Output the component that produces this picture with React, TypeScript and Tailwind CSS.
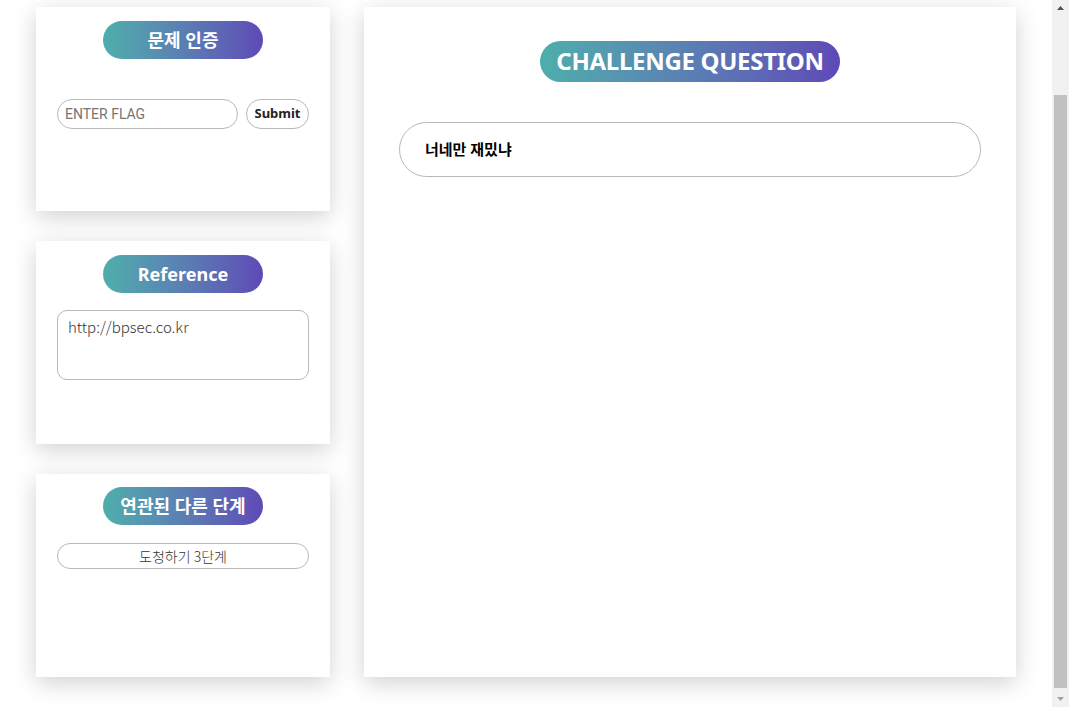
import { useLayoutEffect, useRef } from "react";

const font = { fontFamily: '"Noto Sans", "Noto Sans CJK KR", sans-serif' };
const krLight = { fontFamily: '"Noto Sans CJK KR", sans-serif' };

function Pill({ children, big }: { children: React.ReactNode; big?: boolean }) {
  return (
    <div
      className={`mx-auto flex items-center justify-center rounded-full bg-gradient-to-r from-[#4eaeab] to-[#5e49b6] text-white font-bold ${
        big ? "w-[300px] h-[41px] text-[24px] tracking-[-0.3px] pb-[2px]" : "w-[160px] h-[38px] text-[18px]"
      }`}
    >
      {children}
    </div>
  );
}

function ScrollBar() {
  return (
    <div className="w-[17px] h-[707px] bg-[#f1f1f1] flex flex-col shrink-0">
      <div className="h-[17px] flex items-start justify-center pt-[6px]">
        <svg width="7" height="4" viewBox="0 0 7 4">
          <path d="M3.5 0L7 4H0z" fill="#505050" />
        </svg>
      </div>
      <div className="flex-1 px-[2px] pt-[78px] pb-[2px]">
        <div className="h-full bg-[#c1c1c1]" />
      </div>
      <div className="h-[17px] flex items-end justify-center pb-[6px]">
        <svg width="7" height="4" viewBox="0 0 7 4">
          <path d="M0 0H7L3.5 4z" fill="#a3a3a3" />
        </svg>
      </div>
    </div>
  );
}

export default function App() {
  const ref = useRef<HTMLDivElement>(null);
  useLayoutEffect(() => {
    if (ref.current) ref.current.scrollTop = 93;
  }, []);

  return (
    <div className="flex h-[707px] overflow-hidden bg-white" style={font}>
      <div ref={ref} className="flex-1 h-[707px] overflow-y-scroll [scrollbar-width:none]">
        <div className="min-h-[802px] pt-[100px] pb-[31px] px-[36px]">
          <div className="flex gap-[34px] items-start">
            {/* Left column */}
            <div className="w-[294px] flex flex-col gap-[30px]">
              <div className="h-[204px] bg-white shadow-[0_6px_22px_rgba(0,0,0,0.18)] pt-[14px] px-[21px]">
                <Pill>문제 인증</Pill>
                <div className="flex gap-[8px] mt-[40px]">
                  <input
                    placeholder="ENTER FLAG"
                    className="w-[181px] h-[30px] rounded-full border border-[#b8b8b8] px-[7px] text-[14px] text-[#333] placeholder:text-[#757575] outline-none"
                    style={{ fontFamily: "Roboto, sans-serif" }}
                  />
                  <button
                    className="w-[63px] h-[30px] rounded-full border border-[#b8b8b8] text-[13px] font-bold text-[#222] bg-white"
                    style={{ fontFamily: '"Noto Sans", sans-serif' }}
                  >
                    Submit
                  </button>
                </div>
              </div>

              <div className="h-[203px] bg-white shadow-[0_6px_22px_rgba(0,0,0,0.18)] pt-[14px] px-[21px]">
                <Pill>Reference</Pill>
                <div
                  className="mt-[17px] h-[70px] rounded-[10px] border border-[#b8b8b8] px-[10px] pt-[5px] text-[15px] font-light text-[#333]"
                  style={krLight}
                >
                  http://bpsec.co.kr
                </div>
              </div>

              <div className="h-[203px] bg-white shadow-[0_6px_22px_rgba(0,0,0,0.18)] pt-[13px] px-[21px]">
                <Pill>연관된 다른 단계</Pill>
                <button
                  className="mt-[18px] w-full h-[26px] rounded-full border border-[#b8b8b8] bg-white text-[14px] font-light text-[#333]"
                  style={krLight}
                >
                  도청하기 3단계
                </button>
              </div>
            </div>

            {/* Right card */}
            <div className="w-[652px] h-[670px] bg-white shadow-[0_6px_22px_rgba(0,0,0,0.18)] pt-[34px] px-[35px]">
              <Pill big>CHALLENGE QUESTION</Pill>
              <div className="mt-[40px] h-[55px] rounded-full border border-[#b8b8b8] flex items-center px-[25px] text-[15px] font-bold text-black">
                너네만 재밌냐
              </div>
            </div>
          </div>
        </div>
      </div>
      <ScrollBar />
    </div>
  );
}
